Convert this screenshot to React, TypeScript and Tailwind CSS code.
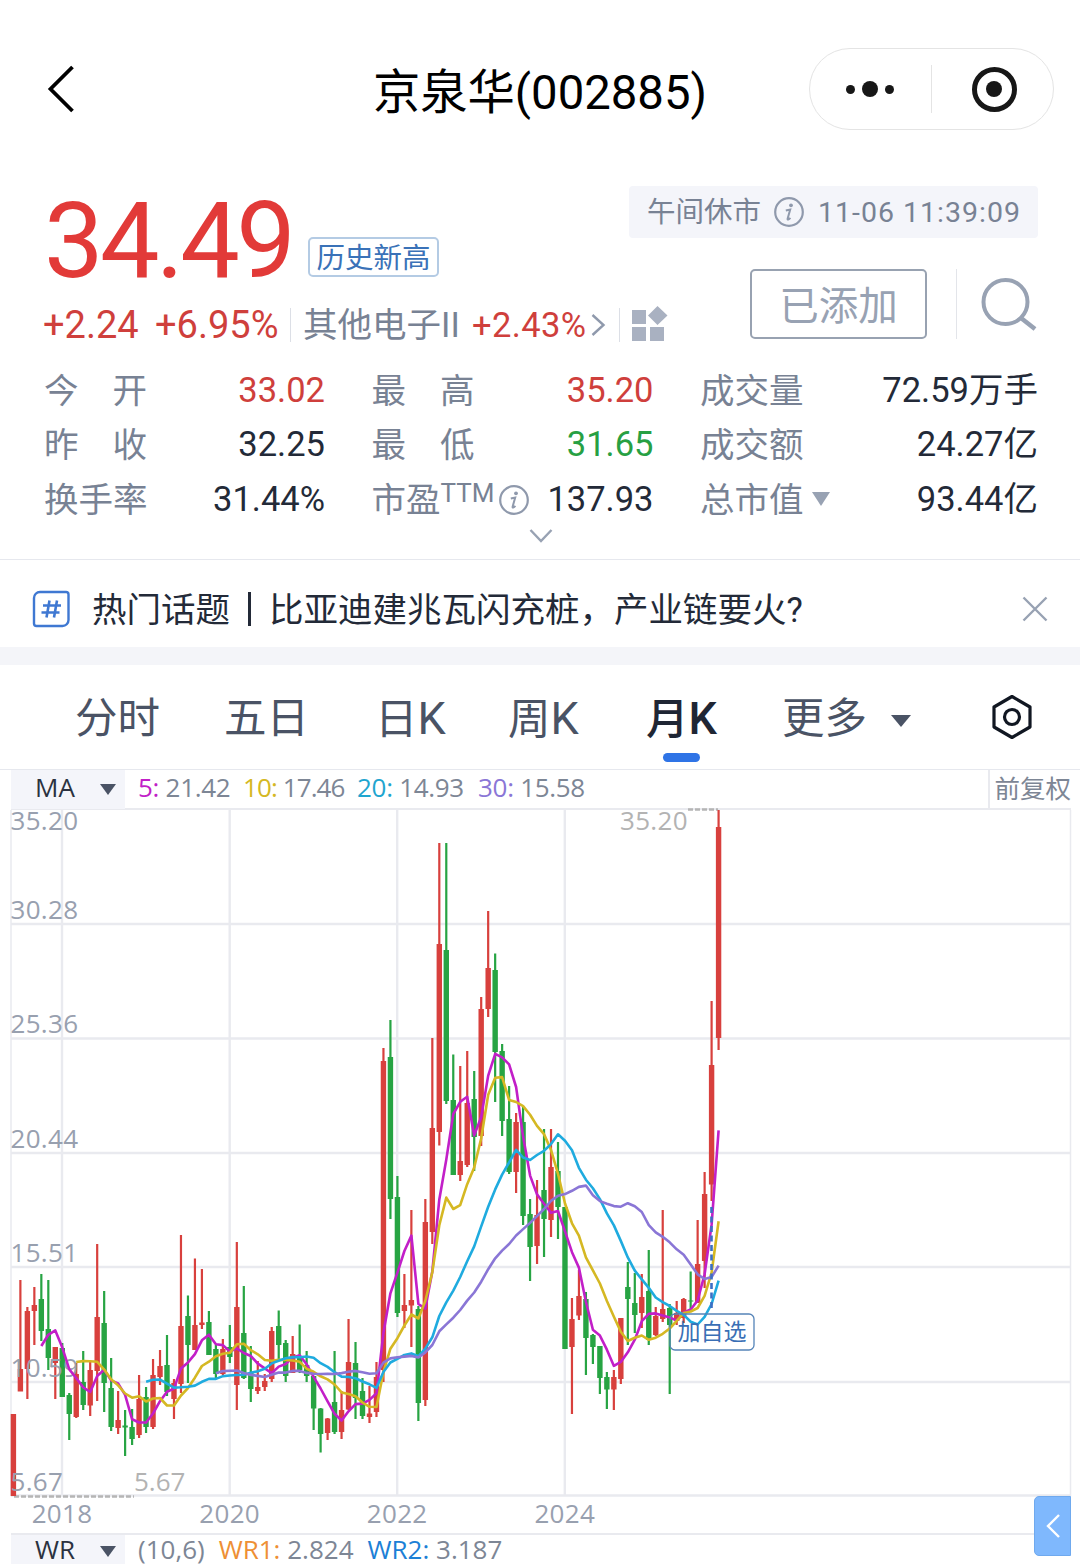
import React from 'react';

type Candle = [dir: 'r' | 'g', high: number, low: number, top: number, bottom: number];

// monthly candles since 2017-06, in chart pixels
const candles: Candle[] = [
  ['r', 1414, 1496, 1414, 1496],
  ['r', 1280, 1391, 1369, 1391.5],
  ['r', 1307, 1399, 1311, 1369],
  ['r', 1287, 1345, 1305, 1311],
  ['g', 1274, 1341, 1299, 1331],
  ['g', 1280, 1370, 1329, 1358],
  ['r', 1347, 1399, 1347, 1363],
  ['g', 1343, 1397, 1348, 1397],
  ['g', 1393, 1440, 1395, 1414],
  ['r', 1363, 1418, 1374, 1417],
  ['g', 1351, 1410, 1382, 1405],
  ['r', 1362, 1416, 1370, 1405.5],
  ['r', 1244, 1401, 1317, 1371],
  ['g', 1291, 1412, 1323, 1383],
  ['g', 1358, 1431, 1388, 1427],
  ['r', 1391, 1434, 1420, 1428],
  ['g', 1410, 1456, 1425.5, 1427.5],
  ['g', 1409, 1445, 1427, 1439],
  ['r', 1375, 1438, 1399, 1435],
  ['g', 1387, 1433, 1397, 1427],
  ['r', 1359, 1429, 1375, 1427],
  ['r', 1350, 1385, 1366, 1377],
  ['g', 1335, 1396, 1365, 1392],
  ['r', 1379, 1419, 1383, 1399],
  ['r', 1235, 1393, 1326, 1384],
  ['g', 1295.5, 1383, 1316, 1345],
  ['r', 1258.5, 1350, 1325, 1350],
  ['r', 1269, 1329, 1322.5, 1325],
  ['g', 1311, 1355, 1322, 1355],
  ['g', 1345, 1378, 1349, 1374],
  ['r', 1339, 1375, 1349, 1374],
  ['g', 1325, 1363, 1347, 1357],
  ['r', 1242, 1410, 1307, 1385],
  ['g', 1286, 1379, 1333, 1378],
  ['g', 1346, 1402, 1373, 1389],
  ['r', 1361, 1394, 1387, 1391],
  ['r', 1374, 1391, 1381, 1387],
  ['r', 1327, 1382, 1331, 1379],
  ['g', 1310.5, 1360, 1326, 1345],
  ['g', 1340, 1382, 1343, 1376],
  ['r', 1336, 1373, 1354, 1373],
  ['g', 1324.5, 1373, 1357, 1370],
  ['g', 1351, 1382, 1365, 1376],
  ['g', 1376, 1430, 1376, 1408.5],
  ['g', 1408, 1452.5, 1408.5, 1434],
  ['r', 1418, 1440, 1418.5, 1433],
  ['g', 1351, 1434, 1402, 1432],
  ['r', 1391, 1439, 1410, 1432],
  ['r', 1319, 1410, 1362, 1409.5],
  ['g', 1342, 1419, 1363, 1398],
  ['g', 1378, 1419, 1391, 1416],
  ['r', 1386, 1423, 1413.5, 1417],
  ['r', 1362, 1417, 1377, 1412],
  ['r', 1048, 1382, 1061, 1370],
  ['g', 1020, 1219, 1057, 1199],
  ['g', 1176, 1317, 1197, 1313],
  ['r', 1274, 1328, 1305, 1311],
  ['r', 1210, 1347, 1300, 1305.5],
  ['g', 1306, 1421, 1309, 1403],
  ['r', 1199, 1406, 1222, 1400],
  ['r', 1038, 1244, 1128, 1232],
  ['r', 843, 1145.5, 944, 1132],
  ['g', 843, 1104, 950, 1101],
  ['g', 1054.5, 1175, 1100, 1175],
  ['r', 1066, 1181, 1161, 1175],
  ['r', 1051, 1167, 1103, 1165],
  ['g', 1071, 1171, 1099, 1137],
  ['r', 997, 1146, 1009, 1136],
  ['r', 911, 1017, 968, 1009],
  ['g', 953.5, 1102, 970, 1052],
  ['g', 1044, 1136, 1051, 1121],
  ['g', 1086, 1174, 1119, 1172],
  ['r', 1113, 1193, 1122, 1172],
  ['g', 1107, 1225, 1122, 1216],
  ['g', 1199, 1281, 1214, 1247],
  ['r', 1180, 1264, 1215, 1246],
  ['g', 1129, 1257, 1190, 1219],
  ['r', 1129, 1237, 1167, 1220],
  ['g', 1142, 1239, 1171, 1207],
  ['g', 1207, 1349, 1207, 1349],
  ['r', 1298, 1414, 1319, 1347],
  ['r', 1270, 1320, 1296, 1315.5],
  ['g', 1292, 1375, 1299, 1338],
  ['g', 1334, 1364, 1335, 1347],
  ['g', 1346, 1394, 1346, 1378],
  ['g', 1372, 1409, 1377, 1389.5],
  ['r', 1370, 1410, 1377, 1389.5],
  ['r', 1318, 1384, 1318, 1379],
  ['g', 1262, 1345, 1287, 1299],
  ['g', 1273, 1333, 1303, 1315],
  ['r', 1274, 1328, 1297, 1313],
  ['g', 1250, 1345, 1291, 1340],
  ['r', 1307, 1336, 1316, 1335],
  ['r', 1210, 1322, 1309, 1319],
  ['g', 1304, 1394, 1308, 1325],
  ['r', 1301, 1325, 1313, 1321],
  ['r', 1298, 1323, 1299, 1318],
  ['g', 1271.5, 1309, 1300.5, 1301.5],
  ['r', 1220, 1303, 1264, 1303],
  ['r', 1172, 1288, 1194, 1261],
  ['r', 1001, 1201, 1065, 1184.5],
  ['r', 810, 1050, 827, 1038],
];

const xOf = (i: number) => 13.4 + i * 6.982;
const closes = candles.map((c) => (c[0] === 'r' ? c[3] : c[4]));

function average(days: number) {
  const points: string[] = [];
  for (let i = days - 1; i < closes.length; i++) {
    const sum = closes.slice(i - days + 1, i + 1).reduce((a, b) => a + b, 0);
    points.push(`${xOf(i).toFixed(1)},${(sum / days).toFixed(1)}`);
  }
  return points.join(' ');
}

const averages = [
  { days: 5, color: '#c21fc8' },
  { days: 10, color: '#d5b823' },
  { days: 20, color: '#1fabdf' },
  { days: 30, color: '#8a76d6' },
];

const prices = [
  { label: '35.20', y: 830 },
  { label: '30.28', y: 919 },
  { label: '25.36', y: 1033 },
  { label: '20.44', y: 1148 },
  { label: '15.51', y: 1262 },
  { label: '10.59', y: 1377 },
  { label: '5.67', y: 1491 },
];

const years = [
  { label: '2018', x: 62 },
  { label: '2020', x: 229.7 },
  { label: '2022', x: 397.2 },
  { label: '2024', x: 564.8 },
];

function InfoIcon() {
  return (
    <svg width="32" height="32" viewBox="0 0 32 32" fill="none" className="shrink-0">
      <circle cx="16" cy="16" r="13.8" stroke="#8f99ac" strokeWidth="2.2" />
      <circle cx="18" cy="9.3" r="1.9" fill="#8f99ac" />
      <path d="M12.8 14.6l4.4-1-2.6 9.2c-.3 1.3 1.2.9 2.8-.9" stroke="#8f99ac" strokeWidth="2" />
    </svg>
  );
}

function Triangle({ className }: { className: string }) {
  return (
    <svg viewBox="0 0 20 12" preserveAspectRatio="none" className={className}>
      <path d="M0 0h20L10 12z" fill="currentColor" />
    </svg>
  );
}

function Header() {
  return (
    <header className="mt-12 grid h-[82px] grid-cols-[1fr_auto_1fr] items-center pl-[46px] pr-[26px]">
      <svg width="30" height="50" viewBox="0 0 30 50" fill="none">
        <path d="M26.5 3L4.5 25l22 22" stroke="#000" strokeWidth="3.8" />
      </svg>
      <h1 className="mr-5 whitespace-nowrap pt-[7px] text-[47.3px] leading-[60px] text-black">京泉华(002885)</h1>
      <div className="flex h-[82px] w-[245px] items-center justify-self-end rounded-full border border-[#e4e4e4]">
        <div className="flex w-[121px] items-center justify-center gap-[7px] pr-0.5">
          <span className="size-[9px] rounded-full bg-[#171717]" />
          <span className="size-4 rounded-full bg-[#171717]" />
          <span className="size-[9px] rounded-full bg-[#171717]" />
        </div>
        <span className="h-12 w-px bg-[#e4e4e4]" />
        <div className="flex flex-1 justify-center pl-[3px]">
          <div className="flex size-[45px] items-center justify-center rounded-full border-[5px] border-[#171717]">
            <span className="size-4 rounded-full bg-[#171717]" />
          </div>
        </div>
      </div>
    </header>
  );
}

function Quote() {
  return (
    <section className="mt-14 flex h-[168px] pl-[43px] pr-[42px]">
      <div className="w-[586px] shrink-0">
        <div className="flex h-[110px]">
          <span className="ml-px w-[264px] text-[106px] leading-[110px] tracking-[-3.6px] text-[#e23a38]">34.49</span>
          <span className="mt-[51px] flex h-[40px] w-[131px] items-center justify-center whitespace-nowrap rounded-[5px] border-2 border-[#b4cbe4] pt-1 text-[28.5px] leading-none text-[#3a72b8]">
            历史新高
          </span>
        </div>
        <div className="flex h-[58px] items-center whitespace-nowrap text-[34.5px] leading-none text-[#cf3f3c] *:shrink-0">
          <span className="w-[112px] text-[38px]">+2.24</span>
          <span className="w-[135px] text-[38px]">+6.95%</span>
          <span className="h-[34px] w-px bg-[#dcdfe6]" />
          <span className="ml-3 w-[169px] pt-px text-[#788294]">其他电子II</span>
          <span className="w-[119px] tracking-[0.4px]">+2.43%</span>
          <svg width="15" height="24" viewBox="0 0 15 24" fill="none">
            <path d="M1.5 2l11 10-11 10" stroke="#8f99ac" strokeWidth="2.4" />
          </svg>
          <span className="ml-[13px] h-[34px] w-px bg-[#dcdfe6]" />
          <svg width="38" height="36" viewBox="0 0 38 36" fill="#a9b1c1" className="ml-[11px] mt-[-3px]">
            <path d="M1 4h14v14H1zM1 21h14v14H1zM19 21h14v14H19zM26.500 0L36.500 9.500 26.500 19 17 9.500z" />
          </svg>
        </div>
      </div>
      <div className="flex flex-col items-end">
        <div className="flex h-[52px] w-[409px] items-center whitespace-nowrap rounded bg-[#f4f5fa] pl-[18px] text-[28.5px] leading-none text-[#788294]">
          <span className="w-[126px] pt-[3px]">午间休市</span>
          <InfoIcon />
          <span className="ml-[13px] pt-0.5 tracking-[1px]">11-06 11:39:09</span>
        </div>
        <div className="mt-[31px] flex h-[70px] items-center">
          <div className="flex h-[70px] w-[177px] items-center justify-center rounded-[5px] border-2 border-[#98a2b1] pt-[5px] text-[39.5px] leading-none text-[#98a2b3]">
            已添加
          </div>
          <span className="ml-[29px] h-[70px] w-px bg-[#e3e5ea]" />
          <svg width="60" height="56" viewBox="0 0 60 56" fill="none" className="-mr-px ml-[22px]">
            <circle cx="26.500" cy="26" r="22" stroke="#98a2b3" strokeWidth="4" />
            <path d="M42 42l14 11" stroke="#98a2b3" strokeWidth="4.500" />
          </svg>
        </div>
      </div>
    </section>
  );
}

interface StatProps {
  label: React.ReactNode;
  value: string;
  color?: string;
}

function Stat({ label, value, color = 'text-[#232a38]' }: StatProps) {
  return (
    <div className="flex h-[54.400px] items-center justify-between whitespace-nowrap">
      <span className="flex w-[103px] items-center justify-between pt-0.5 text-[#788294]">{label}</span>
      <span className={color}>{value}</span>
    </div>
  );
}

function Stats() {
  return (
    <section className="h-[205px] pl-11 pr-[42px] pt-[9px]">
      <div className="grid grid-cols-[281px_282px_338px] gap-x-[46.500px] text-[34.5px] leading-none">
        <Stat label={<><i className="not-italic">今</i><i className="not-italic">开</i></>} value="33.02" color="text-[#cf3f3c]" />
        <Stat label={<><i className="not-italic">最</i><i className="not-italic">高</i></>} value="35.20" color="text-[#cf3f3c]" />
        <Stat label="成交量" value="72.59万手" />
        <Stat label={<><i className="not-italic">昨</i><i className="not-italic">收</i></>} value="32.25" />
        <Stat label={<><i className="not-italic">最</i><i className="not-italic">低</i></>} value="31.65" color="text-[#27a043]" />
        <Stat label="成交额" value="24.27亿" />
        <Stat label="换手率" value="31.44%" />
        <Stat
          label={
            <>
              <span>市盈</span>
              <span className="-mt-[14px] mr-[4px] text-[26px]">TTM</span>
              <InfoIcon />
            </>
          }
          value="137.93"
        />
        <Stat
          label={
            <>
              总市值
              <Triangle className="-mt-0.5 ml-2 h-[14px] w-[18px] shrink-0 text-[#98a2b3]" />
            </>
          }
          value="93.44亿"
        />
      </div>
      <svg width="24" height="15" viewBox="0 0 24 15" fill="none" className="ml-[485px] mt-[2px]">
        <path d="M1.500 2L12 13 22.500 2" stroke="#98a2b3" strokeWidth="2.4" />
      </svg>
    </section>
  );
}

function Topic() {
  return (
    <section className="flex h-[88px] items-center border-t border-[#e6e8ee] pl-8 pr-8 pt-2.5 pb-0">
      <svg width="38" height="38" viewBox="0 0 38 38" fill="none">
        <path d="M8 2h26a2.500 2.500 0 0 1 2.500 2.500V30a6 6 0 0 1-6 6H4.500A2.500 2.500 0 0 1 2 33.500V8a6 6 0 0 1 6-6z" stroke="#3f78d2" strokeWidth="2.400" />
        <path d="M17.500 10.500l-3 17M25 10.500l-3 17M11 15.500h18M9.500 22.500h18" stroke="#3f78d2" strokeWidth="2.600" />
      </svg>
      <span className="ml-[22px] whitespace-nowrap pt-[3px] text-[34.5px] leading-none text-[#232a38]">热门话题</span>
      <span className="ml-[18px] h-[34px] w-[3px] bg-[#232a38]" />
      <span className="ml-[18px] flex-1 whitespace-nowrap pt-[3px] text-[34.5px] leading-none text-[#232a38]">比亚迪建兆瓦闪充桩，产业链要火?</span>
      <svg width="26" height="26" viewBox="0 0 26 26" fill="none">
        <path d="M1.500 1.500l23 23M24.500 1.500l-23 23" stroke="#98a2b3" strokeWidth="2.400" />
      </svg>
    </section>
  );
}

function Tabs() {
  return (
    <nav className="flex h-[105px] items-center whitespace-nowrap border-b border-[#e6e8ee] pl-[75px] text-[42.5px] leading-none text-[#4a5365]">
      <span className="w-[149px] pt-1">分时</span>
      <span className="w-[151px] pt-1">五日</span>
      <span className="w-[133px] pt-1">日<span className="text-[45px]">K</span></span>
      <span className="w-[138px] pt-1">周<span className="text-[45px]">K</span></span>
      <span className="relative w-[136px] pt-1 font-medium text-[#1f2634]">
        月<span className="text-[45px]">K</span>
        <span className="absolute left-[17px] top-[61px] h-[9px] w-[37px] rounded-full bg-[#2f74e6]" />
      </span>
      <span className="pt-1">更多</span>
      <Triangle className="ml-6 mt-2 h-3 w-5 text-[#4a5365]" />
      <svg width="42" height="46" viewBox="0 0 42 46" fill="none" className="ml-20" stroke="#111722" strokeWidth="3.200" strokeLinejoin="round">
        <path d="M21 2.500L39 13v20L21 43.500 3 33V13z" />
        <circle cx="21" cy="23" r="7.500" />
      </svg>
    </nav>
  );
}

function Chart() {
  return (
    <svg width="1080" height="723" viewBox="0 810 1080 723" className="block shrink-0 overflow-visible font-['Open_Sans',sans-serif] text-[26px]">
      <g stroke="#e9eaef" strokeWidth="2.400">
        {[924, 1038.5, 1153, 1267, 1382, 1495.500].map((y) => (
          <path key={y} d={`M11 ${y}H1071`} />
        ))}
        {years.map((year) => (
          <path key={year.label} d={`M${year.x} 810V1496`} />
        ))}
        <path d="M11 810V1496M1070.500 810V1496" strokeWidth="1.500" />
      </g>
      <path d="M688 809.500H718M14 1496.500H134" stroke="#b5b5b5" strokeWidth="2.400" strokeDasharray="5 2" />
      {candles.map(([dir, high, low, top, bottom], i) => (
        <g key={i} fill={dir === 'r' ? '#d8403d' : '#27a443'}>
          <rect x={xOf(i) - 1.1} y={high} width="2.200" height={low - high} />
          <rect x={xOf(i) - 2.7} y={top} width="5.400" height={bottom - top} />
        </g>
      ))}
      <g fill="#98a0af">
        {prices.map((p) => (
          <text key={p.label} x="10.500" y={p.y} letterSpacing="0.300">
            {p.label}
          </text>
        ))}
        {years.map((year) => (
          <text key={year.label} x={year.x} y="1523" textAnchor="middle" letterSpacing="0.300">
            {year.label}
          </text>
        ))}
      </g>
      <g fill="#b3b3b3">
        <text x="620" y="830" letterSpacing="0.300">35.20</text>
        <text x="134" y="1491">5.67</text>
      </g>
      {averages.map((line) => (
        <polyline
          key={line.days}
          points={average(line.days)}
          fill="none"
          stroke={line.color}
          strokeWidth="2.600"
          strokeLinejoin="round"
        />
      ))}
      <path d="M711.500 1207V1311" stroke="#3c6fc4" strokeWidth="2.600" strokeDasharray="6 3.500" />
      <rect x="670" y="1314" width="84" height="36" rx="5" fill="none" stroke="#5584b8" strokeWidth="1.300" />
      <text x="712" y="1340" textAnchor="middle" fill="#3a6fb5" className="font-['Noto_Sans_CJK_SC',sans-serif] text-[23px]">
        加自选
      </text>
    </svg>
  );
}

interface ReadingProps {
  name: string;
  value: string;
  color: string;
  className?: string;
}

function Reading({ name, value, color, className = 'mr-[14px]' }: ReadingProps) {
  return (
    <span className={className}>
      <span className={color}>{name}:</span> {value}
    </span>
  );
}

export default function App() {
  return (
    <div className="flex h-[1564px] w-[1080px] flex-col overflow-hidden bg-white font-['Roboto','Noto_Sans_CJK_SC',sans-serif] *:shrink-0">
      <Header />
      <Quote />
      <Stats />
      <Topic />
      <div className="h-[18px] bg-[#f4f5f9]" />
      <Tabs />
      <div className="ml-[11px] mr-[9px] flex h-10 items-center whitespace-nowrap border-b-2 border-[#e9eaef] font-['Open_Sans','Noto_Sans_CJK_SC',sans-serif] text-[26px] leading-none text-[#7d8695]">
        <div className="flex h-[39px] w-[114px] items-center bg-[#f4f5fa] pl-6 text-[#2b3240]">
          <span className="w-[65px] pb-1">MA</span>
          <Triangle className="h-[11px] w-4 text-[#4a5365]" />
        </div>
        <div className="flex flex-1 pb-1 pl-[13px] tracking-[-0.3px]">
          <Reading name="5" value="21.42" color="text-[#c21fc8]" className="w-[105px]" />
          <Reading name="10" value="17.46" color="text-[#d5b823]" className="w-[114px] tracking-[-0.9px]" />
          <Reading name="20" value="14.93" color="text-[#1fa5cf]" className="w-[121px]" />
          <Reading name="30" value="15.58" color="text-[#8a76d6]" />
        </div>
        <div className="flex h-full items-center border-l-2 border-[#e9eaef] pb-px pl-1 text-[25.5px]">前复权</div>
      </div>
      <div className="relative">
        <Chart />
        <div className="absolute left-[1034px] top-[686px] flex h-[60px] w-[37px] items-center justify-center rounded-l-[5px] border border-[#6fa9ee] bg-[#7fb8fd]">
          <svg width="16" height="26" viewBox="0 0 16 26" fill="none">
            <path d="M14 2L3 13l11 11" stroke="#fff" strokeWidth="2.400" />
          </svg>
        </div>
      </div>
      <div className="ml-[11px] mr-[46px] flex h-[31px] items-center whitespace-nowrap border-t-2 border-[#e9eaef] font-['Open_Sans',sans-serif] text-[26px] leading-[29px] text-[#7d8695]">
        <div className="flex h-full w-[114px] items-center bg-[#f4f5fa] pl-6 text-[#2b3240]">
          <span className="w-[65px]">WR</span>
          <Triangle className="mt-1 h-[11px] w-4 text-[#4a5365]" />
        </div>
        <div className="flex pl-[13px]">
          <span className="mr-[14px]">(10,6)</span>
          <Reading name="WR1" value="2.824" color="text-[#ee8f35]" />
          <Reading name="WR2" value="3.187" color="text-[#1c80d6]" />
        </div>
      </div>
    </div>
  );
}
